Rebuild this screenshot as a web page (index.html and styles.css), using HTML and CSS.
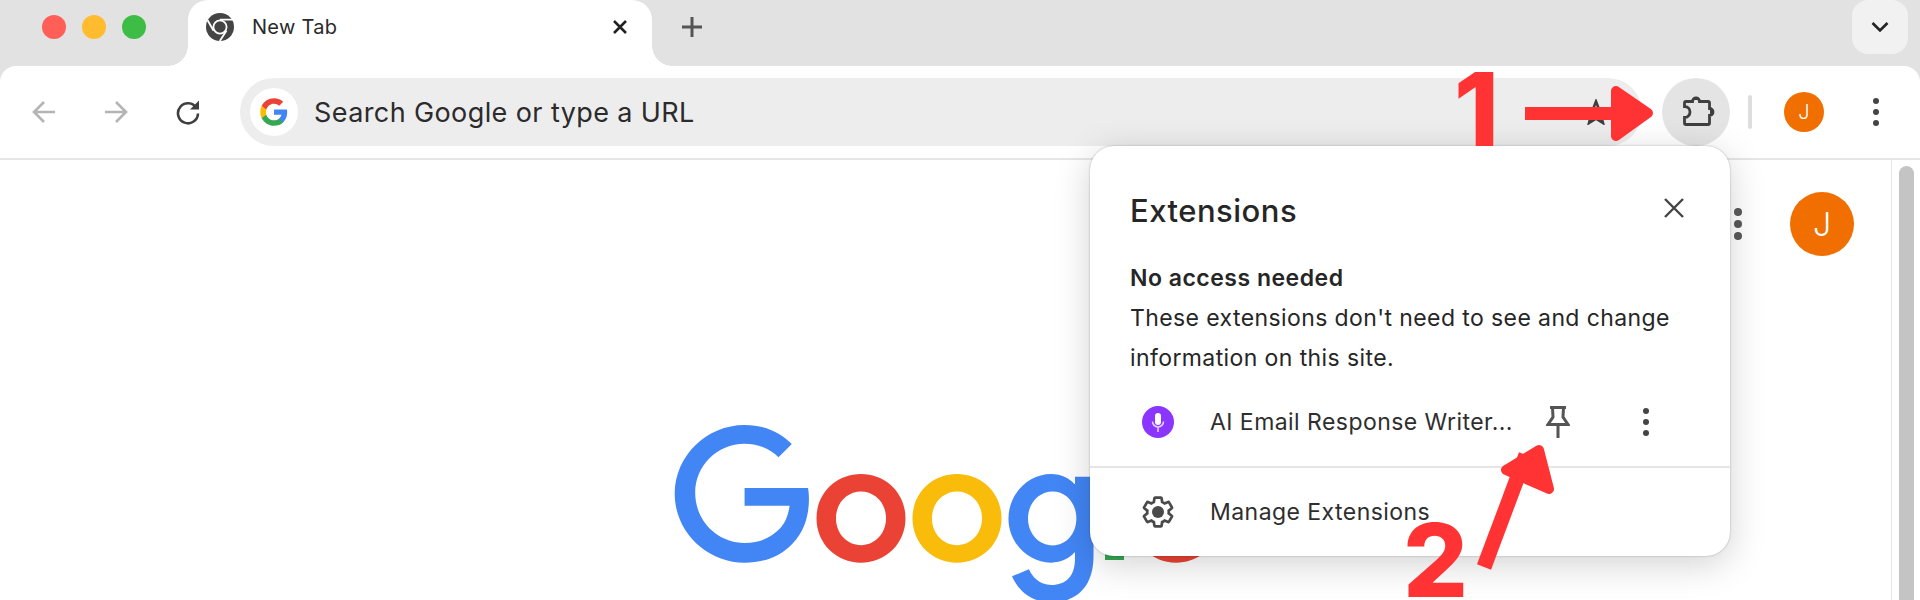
FILE: index.html
```html
<!DOCTYPE html>
<html lang="en">
<head>
<meta charset="utf-8">
<title>New Tab</title>
<link rel="stylesheet" href="styles.css">
</head>
<body>
<div class="window">
  <header class="tabstrip">
    <div class="lights">
      <span class="light light-red"></span>
      <span class="light light-yellow"></span>
      <span class="light light-green"></span>
    </div>
    <div class="tab">
      <svg class="chrome-icon" viewBox="0 0 28 28" width="28" height="28">
        <circle cx="14" cy="14" r="14" fill="#444"/>
        <circle cx="14" cy="14" r="6.6" fill="#444" stroke="#fff" stroke-width="1.8"/>
        <path d="M14 6.6H27M7.6 17.7 1.6 7.2M20.4 17.7 13.8 28" fill="none" stroke="#fff" stroke-width="1.8"/>
      </svg>
      <span class="tab-title">New Tab</span>
      <svg class="tab-close" viewBox="0 0 16 16" width="16" height="16"><path d="M2 2 14 14M14 2 2 14" fill="none" stroke="#222" stroke-width="2.6"/></svg>
    </div>
    <svg class="new-tab" viewBox="0 0 20 20" width="20" height="20"><path d="M10 0V20M0 10H20" fill="none" stroke="#555" stroke-width="3"/></svg>
    <button class="tab-search">
      <svg viewBox="0 0 18 12" width="18" height="12"><path d="M1.5 2 9 9.5 16.500 2" fill="none" stroke="#222" stroke-width="2.600"/></svg>
    </button>
  </header>

  <nav class="toolbar">
    <span class="nav-btn">
      <svg viewBox="0 0 26 26" width="26" height="26"><path d="M24 13H3M13 3 3 13 13 23" fill="none" stroke="#b4b4b4" stroke-width="2.600"/></svg>
    </span>
    <span class="nav-btn">
      <svg viewBox="0 0 26 26" width="26" height="26"><path d="M2 13H23M13 3 23 13 13 23" fill="none" stroke="#b4b4b4" stroke-width="2.600"/></svg>
    </span>
    <span class="nav-btn">
      <svg viewBox="0 0 26 26" width="26" height="26"><path d="M21.500 9A10 10 0 1 0 23 14.500" fill="none" stroke="#3f3f3f" stroke-width="2.600"/><path d="M15 10.500H24V1.500Z" fill="#3f3f3f"/></svg>
    </span>
    <div class="omnibox">
      <span class="omni-g">
        <svg viewBox="0 0 24 24" width="30" height="30">
          <path fill="#4285F4" d="M22.56 12.25c0-.78-.07-1.53-.2-2.25H12v4.26h5.92c-.26 1.37-1.04 2.53-2.21 3.31v2.77h3.57c2.08-1.92 3.28-4.74 3.28-8.09z"/>
          <path fill="#34A853" d="M12 23c2.97 0 5.46-.98 7.28-2.66l-3.57-2.77c-.98.66-2.23 1.06-3.71 1.06-2.86 0-5.29-1.93-6.16-4.53H2.18v2.84C3.99 20.53 7.7 23 12 23z"/>
          <path fill="#FBBC05" d="M5.84 14.09c-.22-.66-.35-1.36-.35-2.09s.13-1.43.35-2.09V7.07H2.18C1.43 8.55 1 10.22 1 12s.43 3.45 1.18 4.93l2.85-2.22.81-.62z"/>
          <path fill="#EA4335" d="M12 5.38c1.62 0 3.06.56 4.21 1.64l3.15-3.15C17.45 2.09 14.97 1 12 1 7.7 1 3.99 3.47 2.18 7.07l3.66 2.84c.87-2.6 3.3-4.53 6.16-4.53z"/>
        </svg>
      </span>
      <span class="omni-text">Search Google or type a URL</span>
      <svg class="omni-star" viewBox="0 0 26 26" width="26" height="26"><path d="M13 2.500 16 10.300 24.300 10.800 17.900 16 20 24 13 19.600 6 24 8.100 16 1.700 10.800 10 10.300Z" fill="none" stroke="#3f3f3f" stroke-width="2.600"/></svg>
    </div>
    <span class="ext-btn">
      <svg viewBox="0 0 40 40" width="40" height="40"><path d="M10 9.500h6.500a3.500 3.500 0 0 1 7 0H32a1.500 1.500 0 0 1 1.500 1.500v5.500a3.500 3.500 0 0 1 0 7V31a1.500 1.500 0 0 1-1.500 1.500H10A1.500 1.500 0 0 1 8.500 31v-5.500a5.500 5.500 0 0 0 0-11V11A1.500 1.500 0 0 1 10 9.500Z" fill="none" stroke="#3f3f3f" stroke-width="2.800"/><path d="M17 8a3 3 0 0 1 6 0ZM34 17a3 3 0 0 1 0 6Z" fill="#3f3f3f"/></svg>
    </span>
    <span class="tool-sep"></span>
    <span class="avatar avatar-small">J</span>
    <svg class="tool-dots" viewBox="0 0 6 28" width="6" height="28"><circle cx="3" cy="3" r="3" fill="#444"/><circle cx="3" cy="14" r="3" fill="#444"/><circle cx="3" cy="25" r="3" fill="#444"/></svg>
  </nav>

  <div class="viewport">
    <main class="page">
      <div class="page-head">
        <svg viewBox="0 0 8 32" width="8" height="32"><circle cx="4" cy="4" r="4" fill="#5a5a5a"/><circle cx="4" cy="16" r="4" fill="#5a5a5a"/><circle cx="4" cy="28" r="4" fill="#5a5a5a"/></svg>
        <span class="avatar avatar-large">J</span>
      </div>
      <svg class="logo" viewBox="0 0 272 92" width="544" height="184" role="img" aria-label="Google">
        <path fill="#EA4335" d="M115.75 47.18c0 12.77-9.99 22.18-22.25 22.18s-22.25-9.41-22.25-22.18C71.25 34.32 81.24 25 93.5 25s22.25 9.32 22.25 22.18zm-9.74 0c0-7.98-5.79-13.44-12.51-13.44S80.99 39.2 80.99 47.18c0 7.9 5.79 13.44 12.51 13.44s12.51-5.55 12.51-13.44z"/>
        <path fill="#F9BC0A" d="M163.75 47.18c0 12.77-9.99 22.18-22.25 22.18s-22.25-9.41-22.25-22.18c0-12.85 9.99-22.18 22.25-22.18s22.25 9.32 22.25 22.18zm-9.74 0c0-7.98-5.79-13.44-12.51-13.44s-12.51 5.46-12.51 13.44c0 7.9 5.79 13.44 12.51 13.44s12.51-5.55 12.51-13.44z"/>
        <path fill="#4285F4" d="M209.75 26.34v39.82c0 16.38-9.66 23.07-21.08 23.07-10.75 0-17.22-7.19-19.66-13.07l8.48-3.53c1.51 3.61 5.21 7.87 11.17 7.87 7.31 0 11.84-4.51 11.84-13v-3.19h-.34c-2.18 2.69-6.38 5.04-11.68 5.04-11.09 0-21.25-9.66-21.25-22.09 0-12.52 10.16-22.26 21.25-22.26 5.29 0 9.49 2.35 11.68 4.96h.34v-3.61h9.25zm-8.56 20.92c0-7.81-5.21-13.52-11.84-13.52-6.72 0-12.35 5.71-12.35 13.52 0 7.73 5.63 13.44 12.35 13.44 6.63 0 11.84-5.71 11.84-13.44z"/>
        <path fill="#34A853" d="M225 3v65h-9.5V3h9.5z"/>
        <path fill="#EA4335" d="M262.02 54.48l7.56 5.04c-2.44 3.61-8.32 9.83-18.48 9.83-12.6 0-22.01-9.74-22.01-22.18 0-13.19 9.49-22.18 20.92-22.18 11.51 0 17.14 9.16 18.98 14.11l1.01 2.52-29.65 12.28c2.27 4.45 5.8 6.72 10.75 6.72 4.96 0 8.4-2.44 10.92-6.14zm-23.27-7.98l19.82-8.23c-1.09-2.77-4.37-4.7-8.23-4.7-4.95 0-11.84 4.37-11.59 12.93z"/>
        <path fill="#4285F4" d="M35.29 41.41V32H67c.31 1.64.47 3.58.47 5.68 0 7.06-1.93 15.79-8.15 22.01-6.05 6.3-13.78 9.66-24.02 9.66C16.32 69.35.36 53.89.36 34.91.36 15.93 16.32.47 35.3.47c10.5 0 17.98 4.12 23.6 9.49l-6.64 6.64c-4.03-3.78-9.49-6.72-16.97-6.72-13.86 0-24.7 11.17-24.7 24.53 0 13.86 10.84 25.03 24.7 25.03 8.99 0 14.11-3.61 17.39-6.89 2.66-2.66 4.41-6.46 5.1-11.65l-22.49.01z"/>
      </svg>
    </main>
    <aside class="scrollbar"><span class="scroll-thumb"></span></aside>
  </div>
</div>

<section class="popup">
  <div class="popup-head">
    <h1 class="popup-title">Extensions</h1>
    <svg class="popup-close" viewBox="0 0 20 20" width="20" height="20"><path d="M1 1 19 19M19 1 1 19" fill="none" stroke="#444" stroke-width="2.400"/></svg>
  </div>
  <h2 class="popup-sub">No access needed</h2>
  <p class="popup-desc">These extensions don't need to see and change<br>information on this site.</p>
  <div class="ext-row">
    <span class="row-icon">
      <svg viewBox="0 0 32 32" width="32" height="32">
        <circle cx="16" cy="16" r="16" fill="#8b36ff"/>
        <rect x="13" y="7" width="6" height="12" rx="3" fill="#fff"/>
        <path d="M10.500 15.500a5.500 5.500 0 0 0 11 0M16 21v5" fill="none" stroke="#e6d6ff" stroke-width="1.500"/>
      </svg>
    </span>
    <span class="row-label">AI Email Response Writer...</span>
    <svg class="row-pin" viewBox="0 0 24 34" width="24" height="34"><path d="M4 2.500H20M6.500 2.500 7 12 2 19.500H22L17 12 17.500 2.500M12 19.500V33" fill="none" stroke="#555" stroke-width="3"/></svg>
    <svg class="row-dots" viewBox="0 0 6 28" width="6" height="28"><circle cx="3" cy="3" r="3" fill="#444"/><circle cx="3" cy="14" r="3" fill="#444"/><circle cx="3" cy="25" r="3" fill="#444"/></svg>
  </div>
  <div class="manage-row">
    <span class="row-icon">
      <svg viewBox="0 0 24 24" width="36" height="36"><path fill="none" stroke="#4a4a4a" stroke-width="1.800" d="M19.14 12.94c.04-.3.06-.61.06-.94 0-.32-.02-.64-.07-.94l2.03-1.58c.18-.14.23-.41.12-.61l-1.92-3.32c-.12-.22-.37-.29-.59-.22l-2.39.96c-.5-.38-1.03-.7-1.62-.94l-.36-2.54c-.04-.24-.24-.41-.48-.41h-3.84c-.24 0-.43.17-.47.41l-.36 2.54c-.59.24-1.13.57-1.62.94l-2.39-.96c-.22-.08-.47 0-.59.22L2.74 8.87c-.12.21-.08.47.12.61l2.03 1.58c-.05.3-.09.63-.09.94s.02.64.07.94l-2.03 1.58c-.18.14-.23.41-.12.61l1.92 3.32c.12.22.37.29.59.22l2.39-.96c.5.38 1.03.7 1.62.94l.36 2.54c.05.24.24.41.48.41h3.84c.24 0 .44-.17.47-.41l.36-2.54c.59-.24 1.13-.56 1.62-.94l2.39.96c.22.08.47 0 .59-.22l1.92-3.32c.12-.22.07-.47-.12-.61l-2.01-1.58z"/><circle cx="12" cy="12" r="4" fill="#4a4a4a"/></svg>
    </span>
    <span class="row-label">Manage Extensions</span>
  </div>
</section>

<div class="annotations">
  <svg class="anno-arrows" viewBox="0 0 1920 600" width="1920" height="600">
    <path d="M1525 107H1612V120H1525Z" fill="#ff3333"/>
    <path d="M1616 91 1648 113 1616 136Z" fill="#ff3333" stroke="#ff3333" stroke-width="10" stroke-linejoin="round"/>
    <path d="M1484 567 1526 455" fill="none" stroke="#ff3333" stroke-width="15"/>
    <path d="M1539 450 1506 470 1549 489Z" fill="#ff3333" stroke="#ff3333" stroke-width="10" stroke-linejoin="round"/>
  </svg>
  <span class="anno-num anno-1">1</span>
  <span class="anno-num anno-2">2</span>
</div>
</body>
</html>
```

FILE: styles.css
```css
* { box-sizing: border-box; }
html, body { margin: 0; padding: 0; height: 600px; overflow: hidden; background: #fff; }
body { font-family: Inter, "Liberation Sans", sans-serif; color: #262626; position: relative; }
svg { display: block; flex: none; }

.window { display: flex; flex-direction: column; height: 600px; background: #e2e2e2; }

.tabstrip { position: relative; z-index: 1; display: flex; align-items: flex-start; height: 66px; flex: none; }
.lights { display: flex; gap: 16px; height: 54px; align-items: center; margin-left: 42px; }
.light { width: 24px; height: 24px; border-radius: 50%; }
.light-red { background: #ff5f57; }
.light-yellow { background: #febc2e; }
.light-green { background: #3dbd45; }

.tab { position: relative; display: flex; align-items: center; width: 464px; height: 66px; margin-left: 42px; padding: 0 24px 12px 18px; background: #fff; border-radius: 20px 20px 0 0; }
.tab::before, .tab::after { content: ""; position: absolute; bottom: 0; width: 20px; height: 20px; }
.tab::before { left: -20px; background: radial-gradient(circle at 0 0, #e2e2e2 19.5px, #fff 20px); }
.tab::after { right: -20px; background: radial-gradient(circle at 100% 0, #e2e2e2 19.5px, #fff 20px); }
.chrome-icon { margin-right: 18px; }
.tab-title { flex: 1; font-size: 20px; line-height: 28px; letter-spacing: .3px; color: #2a2a2a; }
.new-tab { margin: 17px 0 0 30px; }
.tab-search { display: flex; align-items: center; justify-content: center; width: 56px; height: 54px; margin-left: auto; margin-right: 12px; padding: 0; border: 0; background: #f1f1f1; border-radius: 16px; }

.toolbar { display: flex; align-items: center; height: 94px; flex: none; padding-left: 8px; background: #fff; border-bottom: 2px solid #e6e6e6; border-radius: 16px 16px 0 0; }
.nav-btn { display: flex; align-items: center; justify-content: center; width: 72px; height: 68px; }
.omnibox { display: flex; align-items: center; width: 1402px; height: 68px; margin-left: 16px; padding: 0 33px 0 10px; background: #eeedee; border-radius: 34px; }
.omni-g { display: flex; align-items: center; justify-content: center; width: 48px; height: 48px; border-radius: 50%; background: #fff; }
.omni-text { flex: 1; margin-left: 16px; font-size: 27px; letter-spacing: .4px; color: #2b2b2b; }
.ext-btn { display: flex; align-items: center; justify-content: center; width: 68px; height: 68px; margin-left: 20px; border-radius: 50%; background: #e4e4e4; }
.tool-sep { width: 4px; height: 34px; margin-left: 18px; border-radius: 2px; background: #dedede; }
.avatar { display: flex; align-items: center; justify-content: center; border-radius: 50%; background: #f06f00; color: #fff; font-weight: 300; }
.avatar-small { width: 40px; height: 40px; margin-left: 32px; font-size: 20px; }
.tool-dots { margin-left: 49px; }

.viewport { display: flex; flex: 1; min-height: 0; background: #fff; }
.page { flex: 1; min-width: 0; display: flex; flex-direction: column; align-items: center; overflow: hidden; }
.page-head { align-self: stretch; display: flex; justify-content: flex-end; align-items: center; gap: 48px; padding: 32px 37px 0 0; }
.avatar-large { width: 64px; height: 64px; font-size: 32px; }
.logo { margin-top: 168px; }
.scrollbar { width: 29px; flex: none; padding: 6px 7px 0 7px; border-left: 1px solid #e6e6e6; background: #fff; }
.scroll-thumb { display: block; width: 15px; height: 100%; border-radius: 8px 8px 0 0; background: #c4c4c4; }

.popup { position: absolute; left: 1090px; top: 146px; width: 640px; height: 410px; padding-left: 40px; background: #fff; border-radius: 24px; box-shadow: 0 0 2px rgba(0,0,0,.3), 0 8px 36px rgba(0,0,0,.18); }
.popup-head { display: flex; align-items: center; justify-content: space-between; height: 40px; margin-top: 44px; padding-right: 46px; }
.popup-close { margin-top: -4px; }
.popup-title { margin: 2px 0 0; font-size: 31px; font-weight: 500; line-height: 42px; letter-spacing: .5px; }
.popup-sub { margin: 28px 0 0; font-size: 23px; font-weight: 600; line-height: 40px; letter-spacing: .5px; }
.popup-desc { margin: 0; font-size: 23px; line-height: 40px; letter-spacing: .4px; }
.ext-row, .manage-row { display: flex; align-items: center; margin-left: -40px; padding-left: 48px; }
.ext-row { height: 90px; border-bottom: 2px solid #e6e6e6; }
.manage-row { height: 88px; }
.row-icon { display: flex; align-items: center; justify-content: center; width: 40px; height: 40px; margin-right: 32px; }
.row-label { font-size: 23px; letter-spacing: .45px; color: #2e2e2e; }
.row-pin { margin-left: 33px; }
.row-dots { margin-left: 73px; }

.annotations { position: absolute; left: 0; top: 0; width: 1920px; height: 600px; overflow: hidden; pointer-events: none; }
.anno-arrows { position: absolute; left: 0; top: 0; }
.anno-num { position: absolute; font-weight: 800; font-size: 102px; line-height: 76px; color: #ff3333; }
.anno-1 { left: 1454px; top: 71px; }
.anno-2 { left: 1403px; top: 522px; }
```
